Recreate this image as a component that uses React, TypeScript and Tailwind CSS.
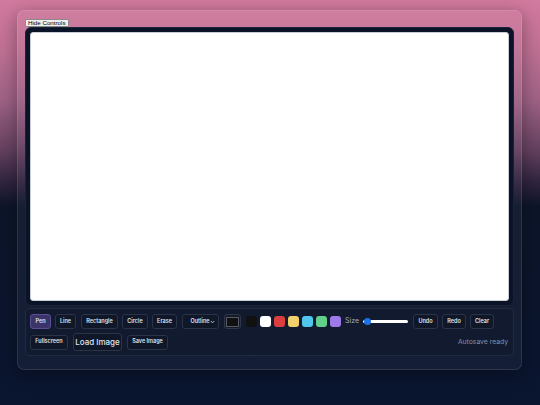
import React from "react";

const btn =
  "h-[15px] px-[5px] rounded-[3px] border border-[#2a3447] bg-[#0f1729] text-[5.5px] font-semibold text-[#dfe5ee] flex items-center justify-center leading-none whitespace-nowrap";

export default function App() {
  const swatches = ["#111111", "#ffffff", "#dc3d3f", "#f2d06b", "#4fc6ee", "#63cf8c", "#9d7aea"];
  return (
    <div
      className="w-full h-[405px] overflow-hidden pt-[10px] pl-[17px] bg-[linear-gradient(180deg,#d27a9f_0%,#c07194_12%,#9e6185_25%,#64415f_37%,#30243f_45%,#0d1529_51%,#0a1530_100%)]"
      style={{ fontFamily: "Inter, 'Noto Sans', sans-serif" }}
    >
      <div className="w-[505px] h-[360px] rounded-[7px] border border-white/10 bg-white/[0.04] shadow-[0_4px_18px_rgba(0,0,0,0.35)] pt-[8px] px-[7px]">
        <div className="flex">
          <button
            className="h-[8px] px-[2px] bg-[#efefef] border border-[#8a8a8a] rounded-[1px] text-[6.2px] leading-none text-black flex items-center whitespace-nowrap"
            style={{ fontFamily: "'Liberation Sans', Arial, sans-serif" }}
          >
            Hide Controls
          </button>
        </div>
        <div className="rounded-[6px] bg-[#0b1328] border border-[#1a2238] p-[4px]">
          <div className="h-[269px] rounded-[3px] bg-white border border-[#c9ced6]" />
        </div>
        <div className="mt-[2px] rounded-[5px] border border-white/[0.07] bg-[#111a2e] pt-[5px] pb-[4px] px-[4px] flex flex-col gap-[4px]">
          <div className="flex items-center h-[15px]">
            <button className={btn + " bg-[#3b3468] border-[#5a4f95] w-[21px]"}>Pen</button>
            <button className={btn + " ml-[4px] w-[21px]"}>Line</button>
            <button className={btn + " ml-[5px] w-[37px]"}>Rectangle</button>
            <button className={btn + " ml-[4px] w-[26px]"}>Circle</button>
            <button className={btn + " ml-[4px] w-[25px]"}>Erase</button>
            <div className={btn + " ml-[5px] w-[37px] justify-between pl-[7px] pr-[3px]"}>
              <span>Outline</span>
              <svg width="5" height="4" viewBox="0 0 5 4">
                <path d="M0.8 1 L2.5 2.8 L4.2 1" stroke="#dfe5ee" strokeWidth="0.8" fill="none" />
              </svg>
            </div>
            <div className="ml-[5px] w-[17px] h-[15px] rounded-[3px] border border-[#2f3747] bg-[#151b27] flex items-center justify-center">
              <div className="w-[13px] h-[10px] bg-[#111111] border border-[#555b66]" />
            </div>
            <div className="ml-[5px] flex items-center gap-[3px]">
              {swatches.map((c) => (
                <div key={c} className="w-[11px] h-[11px] rounded-[3px]" style={{ background: c }} />
              ))}
            </div>
            <span className="ml-[4px] text-[7px] text-[#a3acbb]">Size</span>
            <div className="ml-[4px] w-[45px] h-[8px] relative flex items-center">
              <div className="w-full h-[2.5px] rounded-full bg-white" />
              <div className="absolute left-[1px] w-[7px] h-[7px] rounded-full bg-[#1d72e8]" />
            </div>
            <button className={btn + " ml-[5px] w-[25px]"}>Undo</button>
            <button className={btn + " ml-[4px] w-[24px]"}>Redo</button>
            <button className={btn + " ml-[4px] w-[24px]"}>Clear</button>
          </div>
          <div className="flex items-center h-[18px]">
            <button className={btn + " w-[38px] h-[14px]"}>Fullscreen</button>
            <button className="ml-[5px] w-[49px] h-[18px] rounded-[3px] border border-[#2a3447] bg-[#0f1729] text-[8px] font-medium text-[#dfe5ee] flex items-center justify-center leading-none whitespace-nowrap">
              Load Image
            </button>
            <button className={btn + " ml-[5px] w-[41px] h-[14px]"}>Save Image</button>
            <span className="ml-auto pr-[1px] text-[6.8px] text-[#8790a2]">Autosave ready</span>
          </div>
        </div>
      </div>
    </div>
  );
}
